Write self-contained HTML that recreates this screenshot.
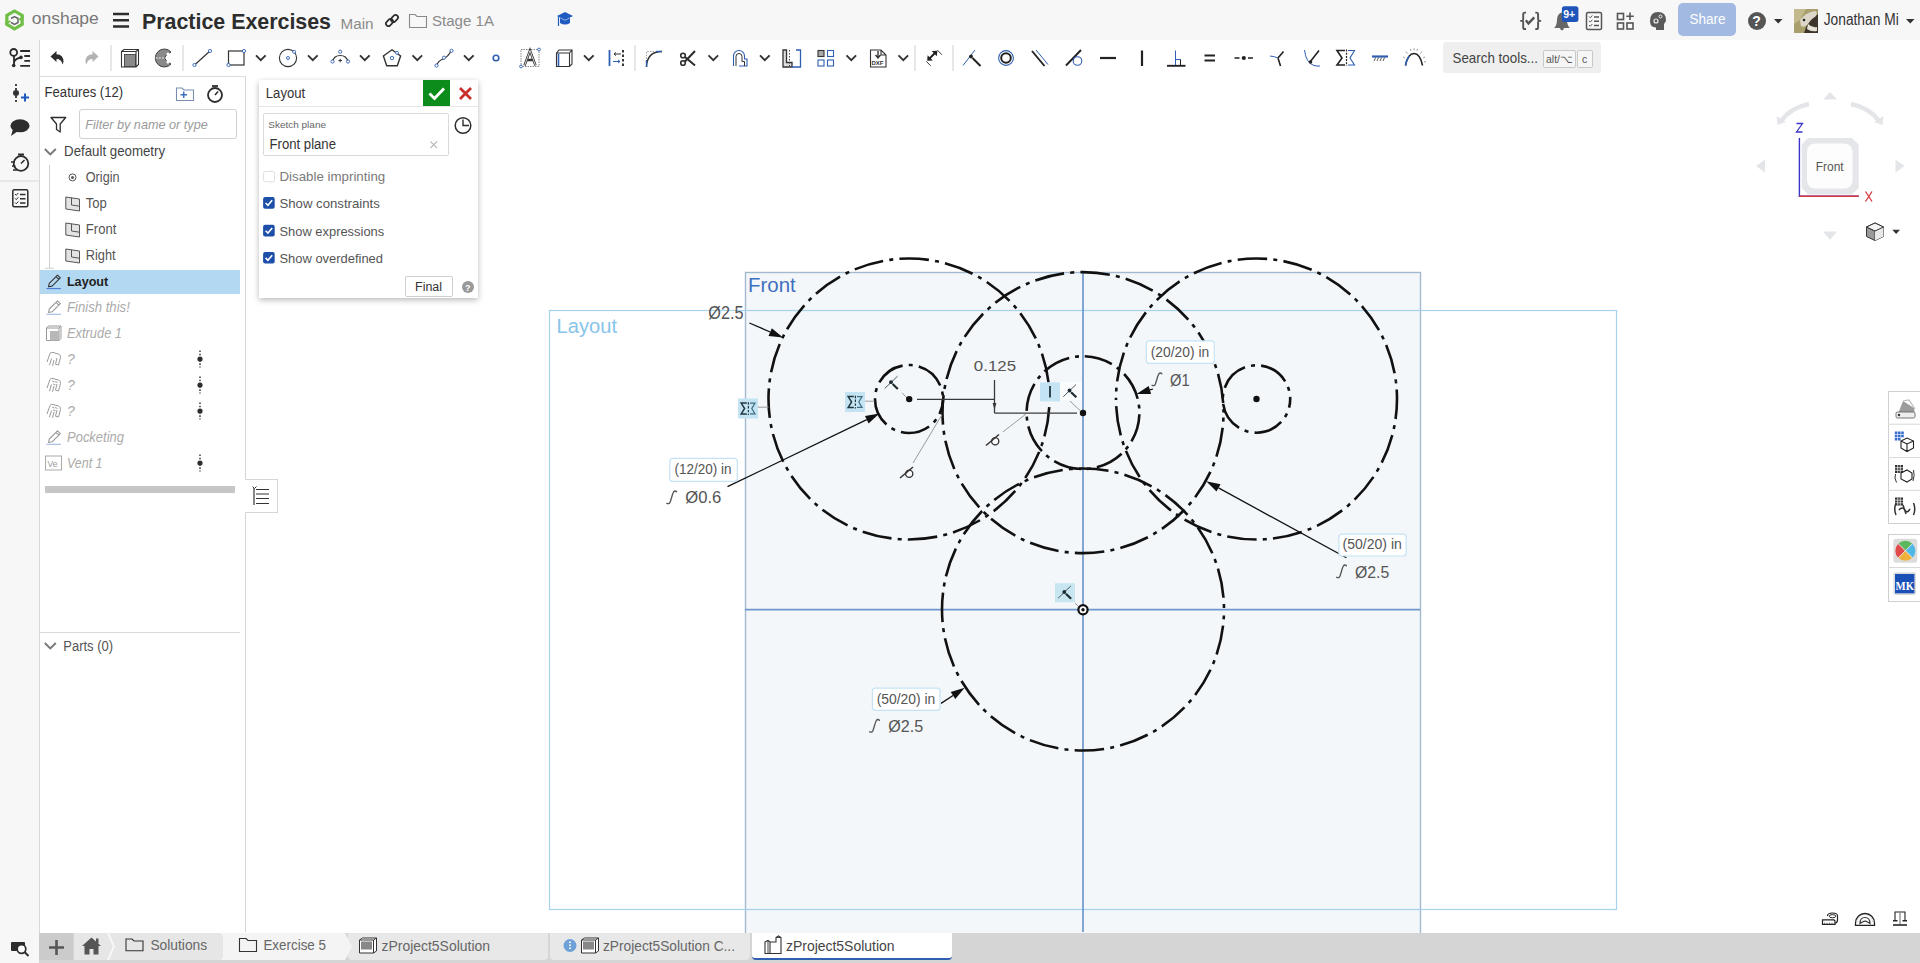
<!DOCTYPE html>
<html><head><meta charset="utf-8">
<style>
*{margin:0;padding:0;box-sizing:border-box}
html,body{width:1920px;height:963px;overflow:hidden;background:#fff;font-family:"Liberation Sans",sans-serif;color:#333}
.a{position:absolute}
svg{position:absolute;overflow:visible}
.t{position:absolute;white-space:nowrap;line-height:1}
</style></head><body>

<div class="a" style="left:0px;top:0px;width:1920px;height:40px;background:#f7f7f8"></div>
<div class="a" style="left:40px;top:40px;width:1880px;height:37px;background:#fff"></div>
<div class="a" style="left:0px;top:40px;width:40px;height:923px;background:#f7f7f7;border-right:1px solid #d9d9d9"></div>
<div class="a" style="left:40px;top:76px;width:206px;height:856px;background:#fff;border-right:1px solid #d6d6d6;border-top:1px solid #dcdcdc"></div>
<svg style="left:0;top:0" width="1920" height="963">
  <rect x="745.5" y="272.5" width="675" height="670" fill="#f3f7fa" stroke="#a3b9d0" stroke-width="1.4"/>
  <rect x="549.5" y="310.5" width="1067" height="599" fill="none" stroke="#a6d2ee" stroke-width="1.2"/>
  <line x1="745" y1="609.6" x2="1420" y2="609.6" stroke="#6e98cc" stroke-width="1.7"/>
  <line x1="1083" y1="272" x2="1083" y2="932" stroke="#6e98cc" stroke-width="1.7"/>
  <g fill="none" stroke="#111" stroke-width="2.6" stroke-dasharray="2 6.2 29.6 6.2 2 0">
<circle cx="909" cy="399" r="140.5" stroke-dashoffset="0"/>
<circle cx="909" cy="399" r="34" stroke-dashoffset="22.3"/>
<circle cx="1083" cy="412.6" r="140.5" stroke-dashoffset="39"/>
<circle cx="1083" cy="412.6" r="56.4" pathLength="800" stroke-dasharray="64.3 13.5 8.8 13.4" stroke-dashoffset="96.0"/>
<circle cx="1256.5" cy="399" r="140.5" transform="rotate(180 1256.5 399)" stroke-dashoffset="36.5"/>
<circle cx="1256.5" cy="399" r="33.7" stroke-dashoffset="29"/>
<circle cx="1083" cy="609.5" r="141" stroke-dashoffset="38"/>
  </g>
</svg>
<div class="a" style="left:39px;top:933px;width:1881px;height:30px;background:#d5d5d5"></div>
<div class="a" style="left:1678px;top:3px;width:58px;height:33px;background:#a2b9e2;border-radius:5px"></div>
<div class="a" style="left:1443px;top:42px;width:158px;height:31px;background:#efefef;border-radius:3px"></div>
<div class="a" style="left:1543px;top:50px;width:33px;height:18px;background:#f6f6f6;border:1px solid #c9c9c9;border-radius:2px"></div>
<div class="a" style="left:1577px;top:50px;width:16px;height:18px;background:#f6f6f6;border:1px solid #c9c9c9;border-radius:2px"></div>
<div class="a" style="left:79px;top:109px;width:158px;height:30px;border:1px solid #d0d0d0;border-radius:3px;background:#fff"></div>
<div class="a" style="left:49px;top:165px;width:1px;height:103px;background:#cfcfcf"></div>
<div class="a" style="left:40px;top:270px;width:200px;height:24px;background:#b3d9f2"></div>
<div class="a" style="left:45px;top:486px;width:190px;height:7px;background:#c6c6c6"></div>
<div class="a" style="left:40px;top:632px;width:200px;height:1px;background:#d9d9d9"></div>
<div class="a" style="left:245px;top:479px;width:33px;height:34px;background:#fff;border:1px solid #d6d6d6;border-left:none"></div>
<div class="a" style="left:259px;top:80px;width:219px;height:218px;background:#fff;box-shadow:0 2px 6px rgba(0,0,0,.28)"></div>
<div class="a" style="left:423px;top:80px;width:27px;height:27px;background:#0c8d1b"></div>
<div class="a" style="left:259px;top:106px;width:219px;height:1px;background:#e6e6e6"></div>
<div class="a" style="left:263px;top:113px;width:186px;height:43px;border:1px solid #dadada;border-radius:2px"></div>
<div class="a" style="left:405px;top:276px;width:48px;height:21px;border:1px solid #cfcfcf;border-radius:2px;background:#fff"></div>
<div class="a" style="left:39px;top:933px;width:34px;height:27px;background:#cbcbcb"></div>
<div class="a" style="left:74px;top:933px;width:271px;height:27px;background:#e6e6e6"></div>
<div class="a" style="left:223px;top:933px;width:122px;height:27px;background:#f4f4f4"></div>
<div class="a" style="left:348px;top:933px;width:200px;height:27px;background:#e8e8e8;border-radius:0 0 4px 4px"></div>
<div class="a" style="left:550px;top:933px;width:200px;height:27px;background:#e8e8e8;border-radius:0 0 4px 4px"></div>
<div class="a" style="left:752px;top:933px;width:200px;height:27px;background:#fff;border-bottom:2px solid #2f5fae;border-radius:0 0 4px 4px"></div>
<svg style="left:0;top:0" width="1920" height="963">
<line x1="749.4" y1="323" x2="770.2" y2="332.0" stroke="#111" stroke-width="1.3"/><polygon points="783,337.6 768.5,335.9 771.8,328.2" fill="#111"/>
<line x1="727.5" y1="486.7" x2="866.8" y2="419.7" stroke="#111" stroke-width="1.3"/><polygon points="879.4,413.6 868.6,423.5 865.0,415.9" fill="#111"/>
<line x1="1153" y1="389" x2="1149.9" y2="389.9" stroke="#111" stroke-width="1.3"/><polygon points="1136.5,394 1148.7,385.9 1151.1,394.0" fill="#111"/>
<line x1="1346.4" y1="557.8" x2="1218.5" y2="487.9" stroke="#111" stroke-width="1.3"/><polygon points="1206.2,481.2 1220.5,484.2 1216.5,491.6" fill="#111"/>
<line x1="941" y1="703.4" x2="953.0" y2="695.5" stroke="#111" stroke-width="1.3"/><polygon points="964.7,687.8 955.3,699.0 950.7,692.0" fill="#111"/>
<g stroke="#3a3a3a" stroke-width="1.3" fill="none"><line x1="917" y1="399.3" x2="995" y2="399.3"/><line x1="994.5" y1="380" x2="994.5" y2="413"/><line x1="994.5" y1="413.2" x2="1077" y2="413.2"/></g>
<polygon points="994.5,410 992.6,403 996.4,403" fill="#3a3a3a"/>
<g stroke="#9a9a9a" stroke-width="1"><line x1="757.7" y1="407.2" x2="768.5" y2="407.2"/><line x1="865" y1="401.2" x2="874.5" y2="401.2"/><line x1="913" y1="463" x2="942" y2="414.8"/><line x1="1002.8" y1="432" x2="1026" y2="414"/><line x1="902" y1="392.8" x2="907.7" y2="398.6"/><line x1="1075" y1="603" x2="1078.8" y2="606.8"/><line x1="1070" y1="401" x2="1080" y2="410.5"/></g>
<rect x="738" y="398.5" width="20" height="20" fill="#c4e4f4"/><path d="M746.8,403.1 H741.2 L744.6,408.5 L741.2,413.9 H746.8" fill="none" stroke="#23363e" stroke-width="1.5"/><path d="M750,403.1 H755 L751.8,408.5 L755,413.9 H750" fill="none" stroke="#3f6e82" stroke-width="1.2"/><line x1="748.4" y1="402.3" x2="748.4" y2="415.0" stroke="#23363e" stroke-width="1.2" stroke-dasharray="2.4 1.4"/>
<rect x="845" y="392" width="20" height="20" fill="#c4e4f4"/><path d="M853.8,396.6 H848.2 L851.6,402 L848.2,407.4 H853.8" fill="none" stroke="#23363e" stroke-width="1.5"/><path d="M857,396.6 H862 L858.8,402 L862,407.4 H857" fill="none" stroke="#3f6e82" stroke-width="1.2"/><line x1="855.4" y1="395.8" x2="855.4" y2="408.5" stroke="#23363e" stroke-width="1.2" stroke-dasharray="2.4 1.4"/>
<line x1="884.8" y1="388.4" x2="897.5" y2="376.2" stroke="#3a4a50" stroke-width="0.9"/><circle cx="891" cy="382.2" r="1.9" fill="#1d2a30"/><line x1="892.6" y1="384.0" x2="897.8" y2="389.0" stroke="#1d2a30" stroke-width="2.2"/>
<rect x="1055" y="583.2" width="20" height="19" fill="#c8e6f2"/>
<line x1="1058.1" y1="598.2" x2="1070.8" y2="586.0" stroke="#3a4a50" stroke-width="0.9"/><circle cx="1064.3" cy="592" r="1.9" fill="#1d2a30"/><line x1="1065.9" y1="593.8" x2="1071.1" y2="598.8" stroke="#1d2a30" stroke-width="2.2"/>
<rect x="1040" y="382.4" width="20" height="19" fill="#c4e4f4"/><line x1="1050" y1="386" x2="1050" y2="397.5" stroke="#23363e" stroke-width="1.8"/>
<rect x="1060" y="382" width="22" height="18" fill="#fff" opacity=".6"/>
<line x1="1063.3" y1="396.7" x2="1076.0" y2="384.5" stroke="#3a4a50" stroke-width="0.9"/><circle cx="1069.5" cy="390.5" r="1.9" fill="#1d2a30"/><line x1="1071.1" y1="392.3" x2="1076.3" y2="397.3" stroke="#1d2a30" stroke-width="2.2"/>
<circle cx="909" cy="473" r="4.3" fill="#fff" opacity=".85"/><line x1="900" y1="478" x2="913" y2="467" stroke="#333" stroke-width="1.5"/><circle cx="909.2" cy="473.8" r="3.6" fill="none" stroke="#333" stroke-width="1.3"/>
<circle cx="995" cy="440.5" r="4.3" fill="#fff" opacity=".85"/><line x1="986" y1="445.5" x2="999" y2="434.5" stroke="#333" stroke-width="1.5"/><circle cx="995.2" cy="441.3" r="3.6" fill="none" stroke="#333" stroke-width="1.3"/>
<circle cx="909.2" cy="399.1" r="3.2" fill="#111"/><circle cx="1083" cy="413" r="3.2" fill="#111"/><circle cx="1256.5" cy="399" r="3.2" fill="#111"/>
<circle cx="1083" cy="609.8" r="4.6" fill="#fff" stroke="#111" stroke-width="2.2"/><circle cx="1083" cy="609.8" r="1.7" fill="#111"/>
<rect x="669.8" y="458.4" width="67.5" height="23" rx="3" fill="#fff" stroke="#c5e3f5" stroke-width="1.2"/>
<rect x="1146.4" y="340.9" width="67.9" height="22.5" rx="3" fill="#fff" stroke="#c5e3f5" stroke-width="1.2"/>
<rect x="1338.9" y="534.2" width="67.3" height="21.8" rx="3" fill="#fff" stroke="#c5e3f5" stroke-width="1.2"/>
<rect x="872.4" y="688.2" width="67.6" height="22.1" rx="3" fill="#fff" stroke="#c5e3f5" stroke-width="1.2"/>
</svg>
<svg style="left:0;top:0" width="1920" height="963"><path d="M676.6,491.7 Q675.1,490.2 673.6,492.0 Q672.6,493.5 671.6,497.5 L670.2,502.0 Q669.2,504.5 666.9,503.3" fill="none" stroke="#555" stroke-width="1.35" stroke-linecap="round"/><path d="M1161.8,373.7 Q1160.3,372.2 1158.8,374.0 Q1157.8,375.5 1156.8,379.5 L1155.3999999999999,384.0 Q1154.3999999999999,386.5 1152.1,385.3" fill="none" stroke="#555" stroke-width="1.35" stroke-linecap="round"/><path d="M1346.4,565.7 Q1344.9,564.2 1343.4,566.0 Q1342.4,567.5 1341.4,571.5 L1340.0,576.0 Q1339.0,578.5 1336.7,577.3" fill="none" stroke="#555" stroke-width="1.35" stroke-linecap="round"/><path d="M879.4,720.2 Q877.9,718.7 876.4,720.5 Q875.4,722.0 874.4,726.0 L873.0,730.5 Q872.0,733.0 869.6999999999999,731.8" fill="none" stroke="#555" stroke-width="1.35" stroke-linecap="round"/></svg>
<svg style="left:0;top:0" width="1920" height="80"><g stroke="#2a2a2a" stroke-width="1.8" fill="none"><circle cx="13.7" cy="52.4" r="3.4"/><path d="M14,56 V65 M14,63 Q14,59 21,57.5"/><path d="M20.2,51 H30 M24.3,56 H30 M24.3,60.8 H30 M20.2,65.8 H30"/></g><circle cx="13.7" cy="65.5" r="1.8" fill="#2a2a2a"/><circle cx="21" cy="57.4" r="1.8" fill="#2a2a2a"/><path d="M50.5,56.5 L56.5,51 L56.5,54.3 Q63.5,54.5 63.5,62 L62.5,64.5 Q61.5,59 56.5,59 L56.5,62 Z" fill="#2d2d2d"/><path d="M98.5,56.5 L92.5,51 L92.5,54.3 Q85.5,54.5 85.5,62 L86.5,64.5 Q87.5,59 92.5,59 L92.5,62 Z" fill="#b3b3b3"/><line x1="111" y1="45" x2="111" y2="71" stroke="#d8d8d8" stroke-width="1.2"/><line x1="183" y1="45" x2="183" y2="71" stroke="#d8d8d8" stroke-width="1.2"/><line x1="635" y1="45" x2="635" y2="71" stroke="#d8d8d8" stroke-width="1.2"/><line x1="915" y1="45" x2="915" y2="71" stroke="#d8d8d8" stroke-width="1.2"/><line x1="953" y1="45" x2="953" y2="71" stroke="#d8d8d8" stroke-width="1.2"/><g fill="none" stroke="#333" stroke-width="1.1"><path d="M121.5,51.5 L124,49.5 H138.5 V64.5 L136,67 H121.5 Z M121.5,51.5 H136 V67 M136,51.5 L138.5,49.5"/></g><rect x="124.5" y="54.5" width="11" height="12" fill="#8a8a8a" stroke="#333" stroke-width="0.8"/><path d="M171,52 A9,9 0 1 0 171,64 L166,60.5 A3.5,3.5 0 0 1 166,55.5 Z" fill="#8a8a8a" stroke="#333" stroke-width="0.9"/><path d="M155.5,58 H173" stroke="#fff" stroke-width="0.9" stroke-dasharray="2 1.3"/><circle cx="168" cy="54" r="1.6" fill="#fff"/><circle cx="168" cy="62" r="1.6" fill="#fff"/><line x1="194.5" y1="65" x2="210" y2="51" stroke="#333" stroke-width="1.2"/><circle cx="194.5" cy="65" r="1.6" fill="#fff" stroke="#2f5fb3" stroke-width="0.9"/><circle cx="210" cy="51" r="1.6" fill="#fff" stroke="#2f5fb3" stroke-width="0.9"/><rect x="228.5" y="51" width="15.5" height="14" fill="none" stroke="#333" stroke-width="1.2"/><circle cx="228.5" cy="65" r="1.6" fill="#fff" stroke="#2f5fb3" stroke-width="0.9"/><circle cx="244" cy="51" r="1.6" fill="#fff" stroke="#2f5fb3" stroke-width="0.9"/><path d="M256,55.3 L260.8,60.099999999999994 L265.6,55.3" fill="none" stroke="#333" stroke-width="1.9"/><circle cx="288" cy="58" r="8.6" fill="none" stroke="#333" stroke-width="1.1"/><circle cx="288" cy="58" r="1.5" fill="#fff" stroke="#2f5fb3" stroke-width="0.9"/><circle cx="294.2" cy="51.8" r="1.5" fill="#fff" stroke="#2f5fb3" stroke-width="0.9"/><path d="M308,55.3 L312.8,60.099999999999994 L317.6,55.3" fill="none" stroke="#333" stroke-width="1.9"/><path d="M332.5,61.5 A8,8 0 0 1 348,61.5" fill="none" stroke="#333" stroke-width="1.2"/><path d="M338.5,60.5 h3.5 M340.2,58.8 v3.5" stroke="#333" stroke-width="1"/><circle cx="332.5" cy="61.5" r="1.6" fill="#fff" stroke="#2f5fb3" stroke-width="0.9"/><circle cx="340.2" cy="51.7" r="1.6" fill="#fff" stroke="#2f5fb3" stroke-width="0.9"/><circle cx="348" cy="61.5" r="1.6" fill="#fff" stroke="#2f5fb3" stroke-width="0.9"/><path d="M360,55.3 L364.8,60.099999999999994 L369.6,55.3" fill="none" stroke="#333" stroke-width="1.9"/><path d="M392,49.8 L400.6,56 L397.3,65.8 L386.7,65.8 L383.4,56 Z" fill="none" stroke="#333" stroke-width="1.4"/><circle cx="392" cy="58" r="1.7" fill="#fff" stroke="#2f5fb3" stroke-width="0.9"/><circle cx="397" cy="52.8" r="1.5" fill="#fff" stroke="#2f5fb3" stroke-width="0.9"/><path d="M412.5,55.3 L417.3,60.099999999999994 L422.1,55.3" fill="none" stroke="#333" stroke-width="1.9"/><path d="M436.5,65.5 Q438,61 443,59 Q448,57 451,51" fill="none" stroke="#333" stroke-width="1.2"/><circle cx="436.5" cy="65.5" r="1.6" fill="#fff" stroke="#2f5fb3" stroke-width="0.9"/><circle cx="444" cy="57.7" r="1.6" fill="#fff" stroke="#2f5fb3" stroke-width="0.9"/><circle cx="451.5" cy="50.8" r="1.6" fill="#fff" stroke="#2f5fb3" stroke-width="0.9"/><path d="M464,55.3 L468.8,60.099999999999994 L473.6,55.3" fill="none" stroke="#333" stroke-width="1.9"/><circle cx="496" cy="58" r="2.8" fill="none" stroke="#2f5fb3" stroke-width="1.6"/><rect x="521" y="49.5" width="18" height="17" fill="none" stroke="#666" stroke-width="0.8" stroke-dasharray="1.5 1"/><path d="M524.5,65.5 L530,50.5 L535.5,65.5 M526.5,60 H533.5" fill="none" stroke="#333" stroke-width="2.4"/><path d="M524.5,65.5 L530,50.5 L535.5,65.5" fill="none" stroke="#fff" stroke-width="0.8"/><circle cx="521" cy="66.5" r="1.4" fill="#fff" stroke="#2f5fb3" stroke-width="0.9"/><circle cx="539" cy="49.5" r="1.4" fill="#fff" stroke="#2f5fb3" stroke-width="0.9"/><path d="M556.5,53 L559,50 H572 V64 L569.5,66.5 H556.5 Z M556.5,53 H569.5 V66.5 M569.5,53 L572,50" fill="none" stroke="#333" stroke-width="1.1"/><line x1="558.5" y1="53.5" x2="558.5" y2="66" stroke="#2f5fb3" stroke-width="1.6"/><path d="M584,55.3 L588.8,60.099999999999994 L593.6,55.3" fill="none" stroke="#333" stroke-width="1.9"/><line x1="609.5" y1="50" x2="609.5" y2="66" stroke="#2f5fb3" stroke-width="1.8"/><path d="M614,54 H621 M614,54 l2,-1.6 M614,54 l2,1.6" stroke="#333" stroke-width="1" fill="none"/><path d="M613,61.5 H620 M620,61.5 l-2,-1.6 M620,61.5 l-2,1.6" stroke="#2f5fb3" stroke-width="1" fill="none"/><line x1="623" y1="50" x2="623" y2="66" stroke="#222" stroke-width="1.8" stroke-dasharray="2.5 2"/><path d="M646.5,67 Q647,51.5 662,51.5" fill="none" stroke="#333" stroke-width="1.4"/><path d="M646.5,67 V51.5 H655" fill="none" stroke="#888" stroke-width="0.8" stroke-dasharray="1.5 1.2"/><line x1="646.5" y1="60" x2="646.5" y2="67" stroke="#2f5fb3" stroke-width="1.4"/><line x1="656" y1="51.5" x2="662" y2="51.5" stroke="#2f5fb3" stroke-width="1.4"/><circle cx="683" cy="55.5" r="2.3" fill="none" stroke="#2d2d2d" stroke-width="1.6"/><circle cx="683" cy="63" r="2.3" fill="none" stroke="#2d2d2d" stroke-width="1.6"/><path d="M685,57 L695,65.5 M685,61.5 L695,51" stroke="#2d2d2d" stroke-width="2"/><path d="M708.5,55.3 L713.3,60.099999999999994 L718.1,55.3" fill="none" stroke="#333" stroke-width="1.9"/><path d="M733.5,66 V56 A5.5,5.5 0 0 1 744.5,56 V59 H747 V66 H739" fill="none" stroke="#2f5fb3" stroke-width="1.1"/><path d="M736,66 V56.5 A3,3 0 0 1 742,56.5 V61.5 H744.5 V66" fill="none" stroke="#333" stroke-width="1"/><path d="M760,55.3 L764.8,60.099999999999994 L769.6,55.3" fill="none" stroke="#333" stroke-width="1.9"/><path d="M783,50 H786.5 V62.5 H792 V67 H783 Z" fill="#ddd" stroke="#333" stroke-width="1.3"/><path d="M796,50 H800.5 V67 H791.5" fill="none" stroke="#2f5fb3" stroke-width="1.3"/><line x1="789.5" y1="50" x2="789.5" y2="66" stroke="#333" stroke-width="0.9" stroke-dasharray="1.5 1.5"/><g fill="none" stroke="#2f5fb3" stroke-width="1.1"><rect x="827.5" y="50.5" width="6" height="6"/><rect x="818" y="60" width="6" height="6"/><rect x="827.5" y="60" width="6" height="6"/></g><rect x="818" y="50.5" width="6" height="6" fill="#aaa" stroke="#333" stroke-width="1.1"/><path d="M846.5,55.3 L851.3,60.099999999999994 L856.1,55.3" fill="none" stroke="#333" stroke-width="1.9"/><path d="M870.5,50 H881 L886,55 V67 H870.5 Z M881,50 V55 H886" fill="none" stroke="#333" stroke-width="1.1"/><path d="M878,51 V57.5 M875.5,55 L878,58 L880.5,55" fill="none" stroke="#333" stroke-width="1.4"/><text x="871.5" y="65.3" font-family="Liberation Sans" font-size="6" font-weight="bold" fill="#333">DXF</text><path d="M898.5,55.3 L903.3,60.099999999999994 L908.1,55.3" fill="none" stroke="#333" stroke-width="1.9"/><line x1="929" y1="59" x2="935.5" y2="52.5" stroke="#222" stroke-width="1.9"/><path d="M927.2,60.8 L927.6,55.2 L932.8,60.4 Z M937.3,50.7 L936.9,56.3 L931.7,51.1 Z" fill="#222"/><path d="M926.2,61.3 L930.7,65.8 M937.4,50.1 L941.9,54.8" stroke="#222" stroke-width="0.9"/><line x1="963" y1="65.5" x2="975" y2="50" stroke="#2f5fb3" stroke-width="1"/><circle cx="971" cy="56.5" r="1.9" fill="#222"/><line x1="972.5" y1="58" x2="980.5" y2="66" stroke="#222" stroke-width="2"/><circle cx="1006" cy="58" r="7.4" fill="none" stroke="#2f5fb3" stroke-width="1.1"/><circle cx="1006" cy="58" r="4.8" fill="none" stroke="#222" stroke-width="2"/><line x1="1032" y1="51" x2="1044.5" y2="66" stroke="#222" stroke-width="1.9"/><line x1="1036" y1="50" x2="1048" y2="64.5" stroke="#2f5fb3" stroke-width="1"/><line x1="1066" y1="65.5" x2="1081" y2="50" stroke="#222" stroke-width="1.9"/><circle cx="1077.5" cy="61" r="4.3" fill="none" stroke="#2f5fb3" stroke-width="1.1"/><line x1="1100" y1="58" x2="1116" y2="58" stroke="#222" stroke-width="2.2"/><line x1="1142" y1="50.5" x2="1142" y2="66" stroke="#222" stroke-width="2.2"/><line x1="1167" y1="65.8" x2="1185.5" y2="65.8" stroke="#222" stroke-width="1.9"/><path d="M1175.5,50.5 V65 M1175.5,59.5 H1180.5 V65" fill="none" stroke="#2f5fb3" stroke-width="1"/><path d="M1180.5,59.5 V65" stroke="#222" stroke-width="1"/><path d="M1204.5,55.5 H1215 M1204.5,60.5 H1215" stroke="#222" stroke-width="2"/><path d="M1234.5,58 H1239.5 M1248,58 H1253" stroke="#222" stroke-width="1.3"/><circle cx="1243.8" cy="58" r="2.1" fill="#222"/><path d="M1278,58 L1283.5,51.5 M1278,58 L1280.5,66" stroke="#222" stroke-width="1.6" fill="none"/><path d="M1270,56 Q1275,56.5 1278,58" stroke="#2f5fb3" stroke-width="1" fill="none"/><path d="M1304.5,50 Q1306,63 1314,65.5 Q1317,66.3 1320,66" stroke="#2f5fb3" stroke-width="1" fill="none"/><path d="M1310,62 L1319,50.5" stroke="#222" stroke-width="1.6"/><circle cx="1310.5" cy="62" r="1.8" fill="#222"/><path d="M1345,50.5 H1337 L1342,58 L1337,65 H1345" fill="none" stroke="#222" stroke-width="1.6"/><path d="M1348,50.5 H1354.5 L1350,58 L1354.5,65 H1348" fill="none" stroke="#2f5fb3" stroke-width="1.1"/><line x1="1346.5" y1="49.5" x2="1346.5" y2="66" stroke="#222" stroke-width="1.2" stroke-dasharray="2 1.2"/><line x1="1372" y1="56.5" x2="1388" y2="56.5" stroke="#2f5fb3" stroke-width="2.2"/><path d="M1374,61 l1.6,-3.5 M1377,61 l1.6,-3.5 M1380,61 l1.6,-3.5 M1383,61 l1.6,-3.5" stroke="#444" stroke-width="0.9"/><path d="M1405.5,65.5 Q1408,53.5 1414,53.5 Q1420,53.5 1422.5,65.5" fill="none" stroke="#222" stroke-width="1.6"/><path d="M1405.5,65.5 Q1406.5,59 1409.5,56" fill="none" stroke="#2f5fb3" stroke-width="1.6"/><g stroke="#777" stroke-width="0.7"><path d="M1405,58 l-2,-1 M1407.5,53.5 l-1.5,-2 M1411,51 l-0.6,-2.2 M1414,50.5 V48.2 M1417,51 l0.6,-2.2 M1420.5,53.5 l1.5,-2 M1423,58 l2,-1 M1424,62 l2,-0.5"/></g></svg>
<svg style="left:0;top:0" width="1920" height="40"><path d="M14.5,9.2 L23.8,14.5 V25.3 L14.5,30.8 L5.2,25.3 V14.5 Z" fill="#6fbe45"/><path d="M14.5,12.8 L20.5,16.3 V23.5 L14.5,27 L8.5,23.5 V16.3 Z" fill="#f7f7f8"/><path d="M11,18.5 L14.5,16.5 L18,18.5 V22.5 L14.5,24.5 L11,22.5" fill="none" stroke="#666" stroke-width="1.5"/><path d="M18.5,20 L23.8,17 M10.5,21 L5.2,24" stroke="#6fbe45" stroke-width="2"/><path d="M113,14 H129 M113,20.2 H129 M113,26.5 H129" stroke="#2d2d2d" stroke-width="2.4"/><g fill="none" stroke="#2d2d2d" stroke-width="1.7"><rect x="385.5" y="20" width="8" height="5" rx="2.5" transform="rotate(-45 389.5 22.5)"/><rect x="390.5" y="16" width="8" height="5" rx="2.5" transform="rotate(-45 394.5 18.5)"/></g><path d="M409.5,27.5 V14.5 H415 L417,16.5 H426.5 V27.5 Z" fill="none" stroke="#888" stroke-width="1.1"/><path d="M557,16 L565,12 L573,16 L565,20 Z" fill="#1f5bc0"/><path d="M560,18 V23 Q565,26 570,23 V18 L565,20.5 Z" fill="#1f5bc0"/><line x1="558.5" y1="16.5" x2="558.5" y2="26" stroke="#1f5bc0" stroke-width="1.2"/><path d="M1526,12.6 H1524.8 Q1523.2,12.6 1523.2,14.2 V19.6 Q1523.2,20.9 1521.8,20.9 H1520.2 H1521.8 Q1523.2,20.9 1523.2,22.2 V27.4 Q1523.2,29 1524.8,29 H1526" fill="none" stroke="#555" stroke-width="1.9"/><path d="M1535.3,12.6 H1536.5 Q1538.1,12.6 1538.1,14.2 V19.6 Q1538.1,20.9 1539.5,20.9 H1541.1 H1539.5 Q1538.1,20.9 1538.1,22.2 V27.4 Q1538.1,29 1536.5,29 H1535.3" fill="none" stroke="#555" stroke-width="1.9"/><path d="M1525.8,20.2 L1528.5,23.4 L1534.3,17.4" fill="none" stroke="#555" stroke-width="2.4"/><path d="M1554.2,28 Q1556.8,25.5 1557,20 Q1557.3,13 1562,12.5 Q1566.7,13 1567,20 Q1567.2,25.5 1569.8,28 Z" fill="#666"/><circle cx="1562" cy="28.6" r="1.8" fill="#666"/><rect x="1561.9" y="6.2" width="16.5" height="15.7" rx="2.5" fill="#1f55bb"/><text x="1563.2" y="17.8" font-family="Liberation Sans" font-size="10.5" font-weight="bold" fill="#fff">9+</text><rect x="1586.5" y="12.5" width="15" height="17" rx="1.5" fill="none" stroke="#555" stroke-width="1.5"/><path d="M1589,16.5 l1.3,1.3 l2,-2.3 M1589,20.8 l1.3,1.3 l2,-2.3 M1589,25 l1.3,1.3 l2,-2.3" fill="none" stroke="#555" stroke-width="1"/><path d="M1594,17 H1599 M1594,21.3 H1599 M1594,25.5 H1599" stroke="#555" stroke-width="1.6"/><g fill="none" stroke="#555" stroke-width="1.6"><rect x="1617.5" y="13.5" width="6" height="6"/><rect x="1617.5" y="23" width="6" height="6"/><rect x="1627" y="23" width="6" height="6"/></g><path d="M1630,12.5 V20 M1626.3,16.3 H1633.8" stroke="#555" stroke-width="1.6"/><path d="M1658,12 Q1666.5,12 1666,21 L1664,24 V30 H1656 V27.5 Q1650,27.5 1650,21 Q1650,12 1658,12 Z" fill="#5b5b5b"/><circle cx="1656" cy="21" r="2" fill="none" stroke="#eee" stroke-width="1.2"/><circle cx="1660.5" cy="16.5" r="1.5" fill="none" stroke="#eee" stroke-width="1"/><circle cx="1757" cy="21" r="9" fill="#555"/><text x="1752.2" y="26.3" font-family="Liberation Sans" font-size="14" font-weight="bold" fill="#fff">?</text><path d="M1774,19 h8.5 l-4.25,4.5 Z" fill="#333"/><rect x="1794" y="9" width="24" height="24" fill="#a89f6c"/><path d="M1794,9 H1806 L1800,20 L1794,24 Z" fill="#c2b98c"/><path d="M1818,9 V33 H1804 Q1806,26 1809,22 Q1813,17 1818,14 Z" fill="#3d352c"/><path d="M1800,20 Q1806,12 1815,11 Q1818,12 1816,16 Q1811,19 1808,24 Q1804,28 1801,26 Z" fill="#dcd6c8"/><path d="M1808,24 Q1812,28 1817,27 V31 Q1811,32 1807,29 Z" fill="#e6e2d8"/><circle cx="1804" cy="20" r="1.3" fill="#222"/><path d="M1906,19 h8.5 l-4.25,4.5 Z" fill="#333"/></svg>
<svg style="left:0;top:0" width="40" height="963"><path d="M16,84 V102" stroke="#333" stroke-width="1.8" stroke-dasharray="2 2"/><circle cx="16" cy="93" r="3" fill="#333"/><path d="M25,93.5 V101.5 M21,97.5 H29" stroke="#1f5bc0" stroke-width="2"/><ellipse cx="20" cy="125.8" rx="9.6" ry="6.5" fill="#2d2d2d"/><path d="M13,129 L11,136 L18,131 Z" fill="#2d2d2d"/><circle cx="21" cy="163.5" r="7.3" fill="none" stroke="#2d2d2d" stroke-width="1.8"/><path d="M21,163.5 L24.5,160" stroke="#2d2d2d" stroke-width="1.6"/><path d="M18,154.5 H24 M21,154.5 V156" stroke="#2d2d2d" stroke-width="1.8"/><path d="M11,162 H15 M12,166 H15.5 M13,170 H17" stroke="#2d2d2d" stroke-width="1.3"/><line x1="0" y1="181" x2="39" y2="181" stroke="#d9d9d9" stroke-width="1"/><rect x="12.8" y="189.8" width="15" height="17" rx="1.5" fill="none" stroke="#2d2d2d" stroke-width="1.5"/><path d="M15,194 l1.3,1.3 l2,-2.3 M15,198.3 l1.3,1.3 l2,-2.3 M15,202.5 l1.3,1.3 l2,-2.3" fill="none" stroke="#2d2d2d" stroke-width="1"/><path d="M20,194.5 H25.5 M20,198.8 H25.5 M20,203 H25.5" stroke="#2d2d2d" stroke-width="1.5"/><rect x="11" y="942" width="14" height="9" rx="1" fill="#2d2d2d"/><circle cx="21.5" cy="949" r="4.3" fill="#fff" stroke="#2d2d2d" stroke-width="1.7"/><path d="M24.5,952 L28.5,956" stroke="#2d2d2d" stroke-width="2"/></svg>
<svg style="left:0;top:0" width="300" height="963"><path d="M176.5,100.5 V88 H182 L184,90 H193.5 V100.5 Z" fill="none" stroke="#7a8fb0" stroke-width="1.1"/><path d="M180.5,94.8 H187 M183.75,91.5 V98" stroke="#3b6cc4" stroke-width="1.4"/><circle cx="215" cy="95" r="7" fill="none" stroke="#2d2d2d" stroke-width="1.8"/><path d="M215,95 L218,91.5" stroke="#2d2d2d" stroke-width="1.6"/><path d="M212,86 H218" stroke="#2d2d2d" stroke-width="1.8"/><path d="M51,117.5 H65.7 L60.2,124 V132 L56.5,129.5 V124 Z" fill="none" stroke="#2d2d2d" stroke-width="1.3" stroke-linejoin="round"/><path d="M44.8,149 L50.3,154.5 L55.8,149" fill="none" stroke="#777" stroke-width="1.9"/><path d="M44.8,643 L50.3,648.5 L55.8,643" fill="none" stroke="#777" stroke-width="1.9"/><path d="M45,268.3 H53.8" stroke="#cfcfcf" stroke-width="1"/><circle cx="72.5" cy="177.4" r="3.5" fill="none" stroke="#555" stroke-width="1"/><circle cx="72.5" cy="177.4" r="1.5" fill="#555"/><path d="M65.8,197 L79.5,199 V211 L65.8,209 Z" fill="#e3e3e3" stroke="#555" stroke-width="1"/><path d="M71.5,197.8 V205 L79.5,206.2" fill="none" stroke="#555" stroke-width="1"/><path d="M65.8,223 L79.5,225 V237 L65.8,235 Z" fill="#e3e3e3" stroke="#555" stroke-width="1"/><path d="M71.5,223.8 V231 L79.5,232.2" fill="none" stroke="#555" stroke-width="1"/><path d="M65.8,249 L79.5,251 V263 L65.8,261 Z" fill="#e3e3e3" stroke="#555" stroke-width="1"/><path d="M71.5,249.8 V257 L79.5,258.2" fill="none" stroke="#555" stroke-width="1"/><path d="M48.5,286.8 L49.3,283.3 L57.5,275.1 L60.3,277.90000000000003 L52.1,286.1 Z M56,276.6 L58.8,279.40000000000003" fill="none" stroke="#333" stroke-width="1.1" stroke-linejoin="round"/><path d="M46.5,288.6 H61" stroke="#4a7bd0" stroke-width="1.1"/><path d="M48.5,312.5 L49.3,309.0 L57.5,300.8 L60.3,303.6 L52.1,311.8 Z M56,302.3 L58.8,305.1" fill="none" stroke="#999" stroke-width="1.1" stroke-linejoin="round"/><path d="M46.5,314.3 H61" stroke="#9fb8e0" stroke-width="1.1"/><path d="M48.5,442.5 L49.3,439.0 L57.5,430.8 L60.3,433.6 L52.1,441.8 Z M56,432.3 L58.8,435.1" fill="none" stroke="#999" stroke-width="1.1" stroke-linejoin="round"/><path d="M46.5,444.3 H61" stroke="#9fb8e0" stroke-width="1.1"/><path d="M46.5,328 L48.5,326 H61 V338.5 L59,340.5 H46.5 Z M46.5,328 H59 V340.5 M59,328 L61,326" fill="none" stroke="#999" stroke-width="1"/><rect x="50" y="331" width="9" height="9.5" fill="#b8b8b8"/><path d="M47,362 L50,353.5 Q51,352 53,352.5 L58.5,354 Q61,355 60.5,357.5 L58.5,365 L55.5,364.2 L57,358 M49.5,365.2 L51.5,358.5 M52.5,365.8 L54,360" fill="none" stroke="#9a9a9a" stroke-width="1" stroke-linejoin="round"/><path d="M47,388 L50,379.5 Q51,378 53,378.5 L58.5,380 Q61,381 60.5,383.5 L58.5,391 L55.5,390.2 L57,384 M49.5,391.2 L51.5,384.5 M52.5,391.8 L54,386" fill="none" stroke="#9a9a9a" stroke-width="1" stroke-linejoin="round"/><path d="M52,381 l2.5,1 M55,381.5 l2.5,1 M53,384 l2.5,0.8" stroke="#9a9a9a" stroke-width="0.9"/><path d="M47,414 L50,405.5 Q51,404 53,404.5 L58.5,406 Q61,407 60.5,409.5 L58.5,417 L55.5,416.2 L57,410 M49.5,417.2 L51.5,410.5 M52.5,417.8 L54,412" fill="none" stroke="#9a9a9a" stroke-width="1" stroke-linejoin="round"/><path d="M52,407 l2.5,1 M55,407.5 l2.5,1 M53,410 l2.5,0.8" stroke="#9a9a9a" stroke-width="0.9"/><rect x="45.5" y="456" width="16" height="14" fill="none" stroke="#aaa" stroke-width="1"/><text x="47.5" y="467" font-family="Liberation Sans" font-size="8.5" fill="#999">Ve</text><path d="M200,350.5 V367.5" stroke="#2d2d2d" stroke-width="1.4" stroke-dasharray="1.6 1.6"/><circle cx="200" cy="359" r="2.6" fill="#2d2d2d"/><path d="M200,376.5 V393.5" stroke="#2d2d2d" stroke-width="1.4" stroke-dasharray="1.6 1.6"/><circle cx="200" cy="385" r="2.6" fill="#2d2d2d"/><path d="M200,402.5 V419.5" stroke="#2d2d2d" stroke-width="1.4" stroke-dasharray="1.6 1.6"/><circle cx="200" cy="411" r="2.6" fill="#2d2d2d"/><path d="M200,454.5 V471.5" stroke="#2d2d2d" stroke-width="1.4" stroke-dasharray="1.6 1.6"/><circle cx="200" cy="463" r="2.6" fill="#2d2d2d"/><path d="M256,489.5 H269 M256,494 H269 M256,498.5 H269 M256,503.5 H269" stroke="#333" stroke-width="1.2"/><path d="M254,488 V505" stroke="#555" stroke-width="1.4"/><path d="M252.5,486.5 l2,2 l2,-2" fill="none" stroke="#333" stroke-width="1"/></svg>
<svg style="left:0;top:0" width="500" height="320"><path d="M429.5,93.5 L434.5,98.5 L444,88.5" fill="none" stroke="#fff" stroke-width="2.8"/><path d="M460,88 L471,99 M471,88 L460,99" stroke="#c9302c" stroke-width="2.8"/><circle cx="463" cy="125.5" r="7.8" fill="none" stroke="#2d2d2d" stroke-width="1.5"/><path d="M463,119.5 V125.5 H469" fill="none" stroke="#2d2d2d" stroke-width="1.4"/><path d="M430.5,141.5 L437,148 M437,141.5 L430.5,148" stroke="#bbb" stroke-width="1.1"/><rect x="263.6" y="171.4" width="11" height="10.4" rx="2" fill="#fff" stroke="#ddd" stroke-width="1"/><rect x="263.1" y="197" width="11.6" height="11.7" rx="2" fill="#1d4fa8"/><path d="M265.6,203 L267.9,205.3 L272.2,200.3" fill="none" stroke="#fff" stroke-width="1.6"/><rect x="263.1" y="224.7" width="11.6" height="11.7" rx="2" fill="#1d4fa8"/><path d="M265.6,230.7 L267.9,233.0 L272.2,228.0" fill="none" stroke="#fff" stroke-width="1.6"/><rect x="263.1" y="251.9" width="11.6" height="11.7" rx="2" fill="#1d4fa8"/><path d="M265.6,257.9 L267.9,260.2 L272.2,255.20000000000002" fill="none" stroke="#fff" stroke-width="1.6"/><circle cx="468" cy="287" r="6" fill="#999"/><text x="464.9" y="291" font-family="Liberation Sans" font-size="9" font-weight="bold" fill="#fff">?</text></svg>
<svg style="left:0;top:0" width="1920" height="300"><path d="M1823,99.6 L1830,92 L1837,99.6 Z" fill="#e3e5e8"/><path d="M1809,104 Q1790,108 1781,121" fill="none" stroke="#e3e5e8" stroke-width="4.5"/><path d="M1776.5,116 L1777.5,125 L1786,122 Z" fill="#e3e5e8"/><path d="M1851,104 Q1870,108 1879,121" fill="none" stroke="#e3e5e8" stroke-width="4.5"/><path d="M1883.5,116 L1882.5,125 L1874,122 Z" fill="#e3e5e8"/><path d="M1756,166 L1765,159.4 V172.5 Z" fill="#e3e5e8"/><path d="M1904.5,166 L1895.5,159.4 V172.5 Z" fill="#e3e5e8"/><path d="M1823,231.4 H1837 L1830,239.8 Z" fill="#e3e5e8"/><path d="M1808,138 H1852 L1858.7,144.5 V188 L1852,194.5 H1808 L1801.7,188 V144.5 Z" fill="#e4e6e9"/><rect x="1807" y="143.5" width="45.5" height="45" rx="8" fill="#fdfdfd"/><path d="M1799.4,138 V196.3 H1858.7" fill="none" stroke-width="1.4" stroke="#3a35c8"/><path d="M1799.4,196.3 H1858.7" stroke="#d9363e" stroke-width="1.4"/><path d="M1796.5,123.5 H1802.5 L1796.5,132 H1802.5" fill="none" stroke="#3a35c8" stroke-width="1.3"/><path d="M1865.5,191.5 L1872,201.5 M1872,191.5 L1865.5,201.5" stroke="#d9363e" stroke-width="1.3"/><path d="M1866.5,227 L1875,223 L1883.5,227 V236.5 L1875,240.5 L1866.5,236.5 Z" fill="#9a9a9a" stroke="#333" stroke-width="1"/><path d="M1866.5,227 L1875,231 L1883.5,227 M1875,231 V240.5" fill="none" stroke="#333" stroke-width="1"/><path d="M1875,231 L1883.5,227 V236.5 L1875,240.5 Z" fill="#e8e8e8"/><path d="M1866.5,227 L1875,223 L1883.5,227 L1875,231 Z" fill="#f5f5f5" stroke="#333" stroke-width="1"/><path d="M1892.3,229.8 H1900 L1896.15,234 Z" fill="#333"/></svg>
<div class="a" style="left:1888px;top:390.5px;width:33px;height:133px;background:#fff;border:1px solid #d0d0d0;border-right:none"></div>
<div class="a" style="left:1888px;top:534px;width:33px;height:67.5px;background:#fff;border:1px solid #d0d0d0;border-right:none"></div>
<svg style="left:0;top:0" width="1920" height="963"><line x1="1888" y1="424.2" x2="1920" y2="424.2" stroke="#d8d8d8"/><line x1="1888" y1="457.6" x2="1920" y2="457.6" stroke="#d8d8d8"/><line x1="1888" y1="490.3" x2="1920" y2="490.3" stroke="#d8d8d8"/><line x1="1888" y1="567.5" x2="1920" y2="567.5" stroke="#d8d8d8"/><path d="M1897,416.5 L1903,401 L1914,408 L1915,416.5 Z" fill="#9c9c9c"/><path d="M1903,401 L1909,400 L1915,409" fill="none" stroke="#bbb" stroke-width="1.2"/><rect x="1896" y="412" width="19" height="6" rx="1.5" fill="#eee" stroke="#666" stroke-width="0.9"/><circle cx="1899" cy="415" r="1.2" fill="#333"/><g fill="#3a6fd0"><rect x="1894.8" y="431.5" width="2.6" height="2.6"/><rect x="1898" y="431.5" width="2.6" height="2.6"/><rect x="1901.2" y="431.5" width="2.6" height="2.6"/><rect x="1894.8" y="434.7" width="2.6" height="2.6"/><rect x="1898" y="434.7" width="2.6" height="2.6"/><rect x="1901.2" y="434.7" width="2.6" height="2.6"/><rect x="1894.8" y="437.9" width="2.6" height="2.6"/><rect x="1898" y="437.9" width="2.6" height="2.6"/></g><path d="M1901,441 L1907,438 L1913.5,441 V448 L1907,451.5 L1901,448 Z M1901,441 L1907,444 L1913.5,441 M1907,444 V451.5" fill="none" stroke="#222" stroke-width="1.1"/><g fill="#333"><rect x="1895" y="465" width="8" height="8"/></g><path d="M1895,467.7 H1903 M1895,470.3 H1903 M1897.7,465 V473 M1900.3,465 V473" stroke="#fff" stroke-width="0.7"/><path d="M1901,473 L1907,470 L1912,473 V479 L1907,482 L1901,479 Z" fill="none" stroke="#222" stroke-width="1.1"/><path d="M1895.5,474 Q1894,478 1896.5,482.5 M1913.5,470 Q1915,475 1913,481" fill="none" stroke="#333" stroke-width="1"/><g fill="#333"><rect x="1895" y="497.5" width="8" height="8"/></g><path d="M1895,500.2 H1903 M1895,502.8 H1903 M1897.7,497.5 V505.5 M1900.3,497.5 V505.5" stroke="#fff" stroke-width="0.7"/><path d="M1896,503 Q1893.5,509 1896,515 M1913.5,503 Q1916,509 1913.5,515" fill="none" stroke="#333" stroke-width="1.5"/><path d="M1899,510 Q1902,506 1905,510 Q1907,514 1910,509 M1903,505 L1906,514" fill="none" stroke="#333" stroke-width="1.5"/><rect x="1893.4" y="538.8" width="23.9" height="23.9" rx="3" fill="#dcdcdc"/><path d="M1905.35,550.75 L1898.28,543.68 A10,10 0 0 1 1912.42,543.68 Z" fill="#5cb85c"/><path d="M1905.35,550.75 L1912.42,543.68 A10,10 0 0 1 1912.42,557.82 Z" fill="#4fb8e8"/><path d="M1905.35,550.75 L1912.42,557.82 A10,10 0 0 1 1898.28,557.82 Z" fill="#f0b03c"/><path d="M1905.35,550.75 L1898.28,557.82 A10,10 0 0 1 1898.28,543.68 Z" fill="#e04a4a"/><path d="M1898.1499999999999,543.55 L1912.55,557.95 M1912.55,543.55 L1898.1499999999999,557.95" stroke="#e8e8e8" stroke-width="0.9"/><rect x="1893.4" y="572.3" width="22.6" height="22.7" rx="2" fill="#dcdcdc"/><rect x="1895" y="574" width="19.4" height="19.3" fill="#1a4fb8"/><text x="1895.5" y="589.5" font-family="Liberation Serif" font-size="13" font-weight="bold" fill="#fff" textLength="18.5" lengthAdjust="spacingAndGlyphs">MK</text></svg>
<svg style="left:0;top:0" width="1920" height="963"><path d="M1827.5,916 Q1827.5,913 1832.5,913 Q1837.5,913 1837.5,916 V920 Q1837.5,923 1834.5,923.5" fill="#fff" stroke="#222" stroke-width="1.2"/><ellipse cx="1832.5" cy="916.2" rx="3.2" ry="1.6" fill="none" stroke="#222" stroke-width="1"/><path d="M1822.5,919.8 H1834 L1835,921 V924.3 H1822.5 Z" fill="#fff" stroke="#222" stroke-width="1.2"/><path d="M1824.5,924 v-1.3 M1827,924 v-1.3 M1829.5,924 v-1.3 M1832,924 v-1.3" stroke="#444" stroke-width="0.7"/><path d="M1855.5,925.3 V923 A9.5,9.5 0 0 1 1874.5,923 V925.3 Z" fill="#fff" stroke="#222" stroke-width="1.3"/><path d="M1860,923.5 Q1860,917.5 1865,917.5 Q1870,917.5 1870,923.5 L1867.5,922 Q1865,920.3 1862.5,922 Z" fill="none" stroke="#333" stroke-width="1.2"/><path d="M1857.5,922 A7.5,7.5 0 0 1 1872.5,922" fill="none" stroke="#999" stroke-width="0.7" stroke-dasharray="1 1.2"/><path d="M1895,920 V912 H1905 V920" fill="none" stroke="#222" stroke-width="1.1"/><path d="M1900,912 V924" stroke="#888" stroke-width="1.3"/><path d="M1893,920.8 H1897.5 M1902.5,920.8 H1907" stroke="#222" stroke-width="1.6"/><path d="M1893,925 H1907" stroke="#222" stroke-width="1.6"/></svg>
<svg style="left:0;top:0" width="1920" height="963"><path d="M49,947.5 H64 M56.5,940 V955" stroke="#555" stroke-width="2.6"/><path d="M82,946 L91.5,937.5 L101,946 H98.5 V954.5 H93.5 V949 H89.5 V954.5 H84.5 V946 Z" fill="#555"/><rect x="96" y="938.5" width="2.5" height="5" fill="#555"/><path d="M108,933 L114,946.5 L108,960" fill="none" stroke="#f7f7f7" stroke-width="2"/><path d="M221,933 H230 L236,946.5 L230,960 H221 L228,946.5 Z" fill="#f4f4f4"/><path d="M345,933 L352,946.5 L345,960 Z" fill="#f4f4f4"/><path d="M126,950.8 V939 H132 L134,941 H143 V950.8 Z" fill="none" stroke="#333" stroke-width="1.1"/><path d="M239.5,951.5 V938.5 H246 L248,940.5 H256.5 V951.5 Z" fill="none" stroke="#333" stroke-width="1.1"/><path d="M359.5,940 L362.5,938 H376.5 V951 L373.5,953 H359.5 Z" fill="#fff" stroke="#333" stroke-width="1"/><path d="M359.5,940 H373.5 V953 M373.5,940 L376.5,938" fill="none" stroke="#333" stroke-width="1"/><rect x="361.0" y="941.5" width="11" height="8" fill="#888"/><path d="M581.5,940 L584.5,938 H598.5 V951 L595.5,953 H581.5 Z" fill="#fff" stroke="#333" stroke-width="1"/><path d="M581.5,940 H595.5 V953 M595.5,940 L598.5,938" fill="none" stroke="#333" stroke-width="1"/><rect x="583.0" y="941.5" width="11" height="8" fill="#888"/><circle cx="570" cy="945.5" r="6.5" fill="#6fa0d8"/><path d="M570,941.5 V949.5" stroke="#fff" stroke-width="1.8" stroke-dasharray="1.5 1.5"/><path d="M765,942 L768,940.5 L770,942 V953.5 H765 Z M770,942 H776 V937.5 L778.5,936 L781,937.5 V953.5 H770" fill="none" stroke="#333" stroke-width="1.1"/><path d="M776,937.5 H781 M768,940.5 V953" fill="none" stroke="#333" stroke-width="0.9"/></svg>
<svg style="left:0;top:0;white-space:pre" width="1920" height="963" font-family="Liberation Sans"><text x="556.6" y="332.7" font-size="20.5" fill="#86c4ea" font-weight="normal" font-style="normal" textLength="60.4" lengthAdjust="spacingAndGlyphs">Layout</text><text x="748" y="292" font-size="20.5" fill="#4070c0" font-weight="normal" font-style="normal" textLength="47.7" lengthAdjust="spacingAndGlyphs">Front</text><text x="142" y="28.75" font-size="22.3" fill="#2d2d2d" font-weight="bold" font-style="normal" textLength="189" lengthAdjust="spacingAndGlyphs">Practice Exercises</text><text x="340.5" y="28.8" font-size="15.3" fill="#8a8a8a" font-weight="normal" font-style="normal" textLength="33" lengthAdjust="spacingAndGlyphs">Main</text><text x="432" y="26" font-size="15.3" fill="#8a8a8a" font-weight="normal" font-style="normal" textLength="62" lengthAdjust="spacingAndGlyphs">Stage 1A</text><text x="31.8" y="24.2" font-size="16" fill="#777" font-weight="normal" font-style="normal" textLength="67" lengthAdjust="spacingAndGlyphs">onshape</text><text x="1823.7" y="25" font-size="15.8" fill="#333" font-weight="normal" font-style="normal" textLength="75" lengthAdjust="spacingAndGlyphs">Jonathan Mi</text><text x="1689.4" y="24.4" font-size="15.3" fill="#fff" font-weight="normal" font-style="normal" textLength="36.2" lengthAdjust="spacingAndGlyphs">Share</text><text x="1452.5" y="63" font-size="15" fill="#444" font-weight="normal" font-style="normal" textLength="85.5" lengthAdjust="spacingAndGlyphs">Search tools...</text><text x="1546" y="63" font-size="10.5" fill="#555" font-weight="normal" font-style="normal">alt/&#8997;</text><text x="1582" y="63" font-size="10.5" fill="#555" font-weight="normal" font-style="normal">c</text><text x="44.6" y="97" font-size="13.8" fill="#333" font-weight="normal" font-style="normal" textLength="78.5" lengthAdjust="spacingAndGlyphs">Features (12)</text><text x="85.3" y="128.6" font-size="13.2" fill="#9a9a9a" font-weight="normal" font-style="italic" textLength="122.5" lengthAdjust="spacingAndGlyphs">Filter by name or type</text><text x="64.1" y="156" font-size="13.9" fill="#444" font-weight="normal" font-style="normal" textLength="101" lengthAdjust="spacingAndGlyphs">Default geometry</text><text x="85.8" y="182.1" font-size="14" fill="#555" font-weight="normal" font-style="normal" textLength="33.7" lengthAdjust="spacingAndGlyphs">Origin</text><text x="85.8" y="208" font-size="14" fill="#555" font-weight="normal" font-style="normal" textLength="21.1" lengthAdjust="spacingAndGlyphs">Top</text><text x="85.8" y="233.8" font-size="14" fill="#555" font-weight="normal" font-style="normal" textLength="30.5" lengthAdjust="spacingAndGlyphs">Front</text><text x="85.8" y="260" font-size="14" fill="#555" font-weight="normal" font-style="normal" textLength="29.8" lengthAdjust="spacingAndGlyphs">Right</text><text x="66.9" y="285.8" font-size="13.5" fill="#222" font-weight="bold" font-style="normal" textLength="41.4" lengthAdjust="spacingAndGlyphs">Layout</text><text x="67" y="311.7" font-size="14" fill="#ababab" font-weight="normal" font-style="italic" textLength="62.8" lengthAdjust="spacingAndGlyphs">Finish this!</text><text x="67" y="337.7" font-size="14" fill="#ababab" font-weight="normal" font-style="italic" textLength="55" lengthAdjust="spacingAndGlyphs">Extrude 1</text><text x="67" y="363.7" font-size="14" fill="#ababab" font-weight="normal" font-style="italic">?</text><text x="67" y="389.7" font-size="14" fill="#ababab" font-weight="normal" font-style="italic">?</text><text x="67" y="415.7" font-size="14" fill="#ababab" font-weight="normal" font-style="italic">?</text><text x="67" y="441.7" font-size="14" fill="#ababab" font-weight="normal" font-style="italic" textLength="57" lengthAdjust="spacingAndGlyphs">Pocketing</text><text x="67" y="467.7" font-size="14" fill="#ababab" font-weight="normal" font-style="italic" textLength="35.5" lengthAdjust="spacingAndGlyphs">Vent 1</text><text x="63.3" y="651.3" font-size="13.8" fill="#555" font-weight="normal" font-style="normal" textLength="49.7" lengthAdjust="spacingAndGlyphs">Parts (0)</text><text x="265.8" y="97.9" font-size="14" fill="#333" font-weight="normal" font-style="normal" textLength="39.4" lengthAdjust="spacingAndGlyphs">Layout</text><text x="268.3" y="128" font-size="9.5" fill="#666" font-weight="normal" font-style="normal" textLength="57.7" lengthAdjust="spacingAndGlyphs">Sketch plane</text><text x="269.5" y="148.9" font-size="14" fill="#333" font-weight="normal" font-style="normal" textLength="66.5" lengthAdjust="spacingAndGlyphs">Front plane</text><text x="279.5" y="181" font-size="13.6" fill="#7a7a7a" font-weight="normal" font-style="normal" textLength="105.7" lengthAdjust="spacingAndGlyphs">Disable imprinting</text><text x="279.5" y="207.7" font-size="13.6" fill="#555" font-weight="normal" font-style="normal" textLength="100.3" lengthAdjust="spacingAndGlyphs">Show constraints</text><text x="279.5" y="235.6" font-size="13.6" fill="#555" font-weight="normal" font-style="normal" textLength="104.7" lengthAdjust="spacingAndGlyphs">Show expressions</text><text x="279.5" y="262.5" font-size="13.6" fill="#555" font-weight="normal" font-style="normal" textLength="103.5" lengthAdjust="spacingAndGlyphs">Show overdefined</text><text x="415" y="291" font-size="12.5" fill="#333" font-weight="normal" font-style="normal">Final</text><text x="150.4" y="949.8" font-size="15" fill="#666" font-weight="normal" font-style="normal" textLength="56.8" lengthAdjust="spacingAndGlyphs">Solutions</text><text x="263.4" y="949.8" font-size="15" fill="#666" font-weight="normal" font-style="normal" textLength="62.6" lengthAdjust="spacingAndGlyphs">Exercise 5</text><text x="381.5" y="950.5" font-size="15" fill="#666" font-weight="normal" font-style="normal" textLength="108.5" lengthAdjust="spacingAndGlyphs">zProject5Solution</text><text x="603" y="950.5" font-size="15" fill="#666" font-weight="normal" font-style="normal" textLength="132" lengthAdjust="spacingAndGlyphs">zProject5Solution C...</text><text x="786" y="950.5" font-size="15" fill="#444" font-weight="normal" font-style="normal" textLength="108.5" lengthAdjust="spacingAndGlyphs">zProject5Solution</text><text x="674.6" y="473.7" font-size="14.5" fill="#555" font-weight="normal" font-style="normal" textLength="57" lengthAdjust="spacingAndGlyphs">(12/20) in</text><text x="1150.7" y="356.5" font-size="14.5" fill="#555" font-weight="normal" font-style="normal" textLength="58.5" lengthAdjust="spacingAndGlyphs">(20/20) in</text><text x="1342.6" y="549.1" font-size="14.5" fill="#555" font-weight="normal" font-style="normal" textLength="59.2" lengthAdjust="spacingAndGlyphs">(50/20) in</text><text x="876.7" y="703.6" font-size="14.5" fill="#555" font-weight="normal" font-style="normal" textLength="58.5" lengthAdjust="spacingAndGlyphs">(50/20) in</text><text x="708.3" y="318.9" font-size="17.5" fill="#555" font-weight="normal" font-style="normal" textLength="35.3" lengthAdjust="spacingAndGlyphs">&#216;2.5</text><text x="685.2" y="502.5" font-size="16.5" fill="#555" font-weight="normal" font-style="normal" textLength="36.1" lengthAdjust="spacingAndGlyphs">&#216;0.6</text><text x="1170" y="385.6" font-size="16.5" fill="#555" font-weight="normal" font-style="normal" textLength="19.6" lengthAdjust="spacingAndGlyphs">&#216;1</text><text x="1355" y="577.8" font-size="16.5" fill="#555" font-weight="normal" font-style="normal" textLength="34.3" lengthAdjust="spacingAndGlyphs">&#216;2.5</text><text x="888.3" y="732.1" font-size="16.5" fill="#555" font-weight="normal" font-style="normal" textLength="34.9" lengthAdjust="spacingAndGlyphs">&#216;2.5</text><text x="973.8" y="371.2" font-size="15.5" fill="#555" font-weight="normal" font-style="normal" textLength="42.3" lengthAdjust="spacingAndGlyphs">0.125</text><text x="1815.7" y="171.2" font-size="13" fill="#555" font-weight="normal" font-style="normal" textLength="28" lengthAdjust="spacingAndGlyphs">Front</text></svg>
</body></html>
